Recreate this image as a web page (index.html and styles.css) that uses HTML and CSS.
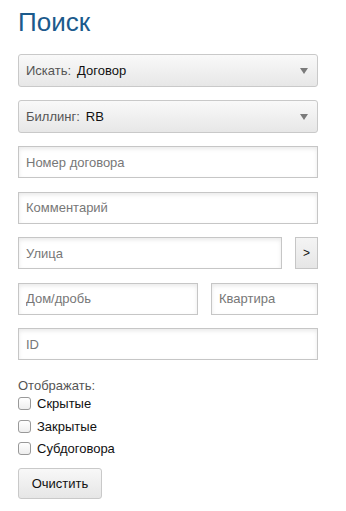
FILE: index.html
```html
<!DOCTYPE html>
<html lang="ru">
<head>
<meta charset="utf-8">
<title>Поиск</title>
<link rel="stylesheet" href="styles.css">
</head>
<body>
<div class="panel">
  <h1 class="title">Поиск</h1>
  <div class="select">
    <span class="sel-label">Искать:</span><span class="sel-value">Договор</span>
    <span class="caret"></span>
  </div>
  <div class="select">
    <span class="sel-label">Биллинг:</span><span class="sel-value">RB</span>
    <span class="caret"></span>
  </div>
  <input class="field" type="text" placeholder="Номер договора">
  <input class="field" type="text" placeholder="Комментарий">
  <div class="row">
    <input class="field grow" type="text" placeholder="Улица">
    <button class="go" type="button">&gt;</button>
  </div>
  <div class="row">
    <input class="field house" type="text" placeholder="Дом/дробь">
    <input class="field flat" type="text" placeholder="Квартира">
  </div>
  <input class="field" type="text" placeholder="ID">
  <div class="show">
    <div class="show-title">Отображать:</div>
    <label class="check"><span class="box"></span>Скрытые</label>
    <label class="check"><span class="box"></span>Закрытые</label>
    <label class="check"><span class="box"></span>Субдоговора</label>
  </div>
  <button class="clear" type="button">Очистить</button>
</div>
</body>
</html>
```
FILE: styles.css
```css
* { box-sizing: border-box; }
html, body { margin: 0; padding: 0; background: #fff; }
body {
  font-family: "Liberation Sans", Arial, sans-serif;
  color: #222;
}
.panel {
  width: 300px;
  margin-left: 18px;
  padding-top: 6px;
  display: flex;
  flex-direction: column;
}
.title {
  margin: 0 0 15px 0;
  font-size: 26px;
  font-weight: normal;
  line-height: 33px;
  color: #1b5a8c;
}
.select {
  position: relative;
  height: 33px;
  margin-bottom: 13px;
  border: 1px solid #c9c9c9;
  border-radius: 3px;
  background: linear-gradient(#f9f9f9, #e7e7e7);
  display: flex;
  align-items: center;
  padding-left: 7px;
  font-size: 13px;
}
.sel-label { color: #555; margin-right: 6px; }
.sel-value { color: #111; }
.caret {
  position: absolute;
  right: 9px;
  top: 13px;
  width: 0; height: 0;
  border-left: 4.5px solid transparent;
  border-right: 4.5px solid transparent;
  border-top: 6px solid #7a7a7a;
}
.field {
  display: block;
  width: 100%;
  height: 32px;
  margin: 0 0 13.5px 0;
  border: 1px solid #c6c6c6;
  border-radius: 0;
  padding: 0 7px;
  font-family: "Liberation Sans", Arial, sans-serif;
  font-size: 13px;
  color: #222;
  background: #fff;
  box-shadow: inset 0 2px 4px rgba(0,0,0,0.09);
  outline: none;
}
.field::placeholder { color: #777; opacity: 1; }
.row {
  display: flex;
  gap: 13px;
  margin-bottom: 13.5px;
}
.row .field { margin: 0; }
.grow { flex: 1; }
.house { width: 180px; flex: none; }
.flat { flex: 1; }
.go {
  width: 23px;
  height: 32px;
  flex: none;
  border: 1px solid #c6c6c6;
  background: linear-gradient(#f4f4f4, #e6e6e6);
  font-family: "Liberation Sans", Arial, sans-serif;
  font-size: 12px;
  color: #111;
  padding: 0;
  border-radius: 0;
}
.show {
  margin-top: 4px;
  font-size: 13px;
}
.show-title {
  color: #555;
  line-height: 16px;
  margin-bottom: -1px;
}
.check {
  display: flex;
  align-items: center;
  height: 22.5px;
  color: #111;
}
.box {
  width: 13px;
  height: 13px;
  border: 1px solid #999;
  border-radius: 3px;
  background: linear-gradient(#fff, #eee);
  margin-right: 6px;
}
.clear {
  margin-top: 8px;
  width: 84px;
  height: 31px;
  border: 1px solid #c9c9c9;
  border-radius: 3px;
  background: linear-gradient(#f8f8f8, #e6e6e6);
  font-family: "Liberation Sans", Arial, sans-serif;
  font-size: 13px;
  color: #111;
  padding: 0;
}
```
